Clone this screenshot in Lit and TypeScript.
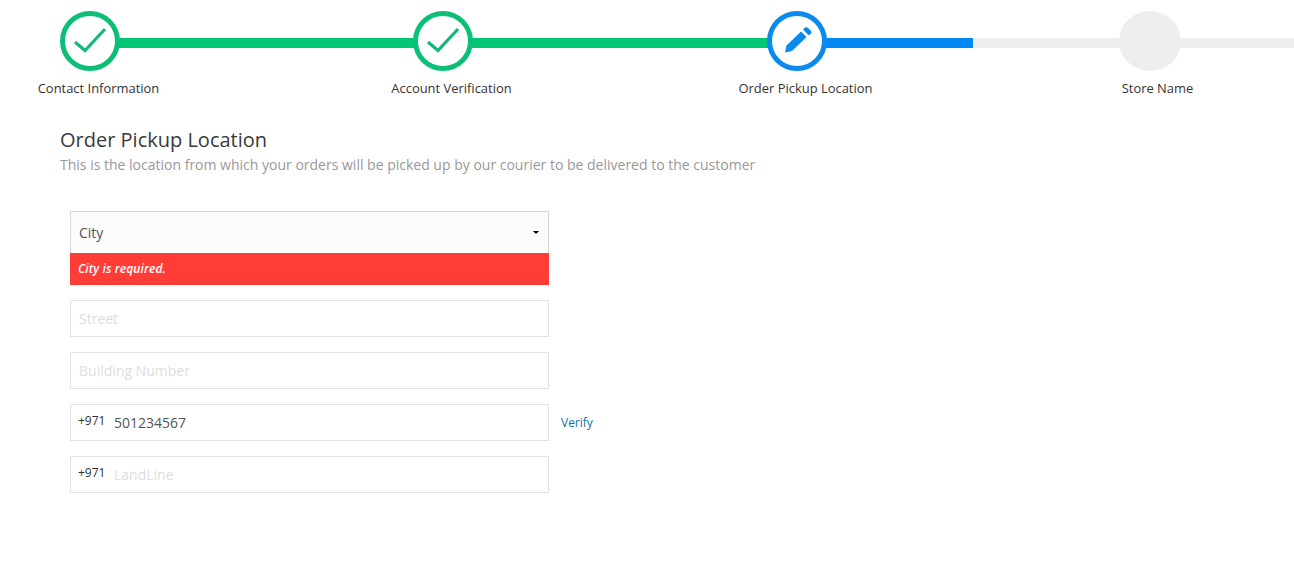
import { LitElement, html, css, svg } from "lit";
import { customElement } from "lit/decorators.js";

const check = svg`<svg class="ico" width="50" height="50" viewBox="0 0 50 50"><path d="M10 26 L20 34.500 L40 13" fill="none" stroke="#14b878" stroke-width="3.200"/></svg>`;
const pencil = svg`<svg class="ico pen" width="27" height="26" viewBox="0 0 27 26"><path fill="#0a8aec" d="M0 25.500 L1.500 18.500 L16 4.500 L21.500 10 L7 24 Z"/><path fill="#0a8aec" d="M18 2.500 L20 .6 Q21.300 -.2 22.500 .6 L26 4 Q27 5.200 26 6.500 L23.500 8.300 Z"/></svg>`;

@customElement("app-root")
export class AppRoot extends LitElement {
  static styles = css`
    :host { display: block; width: 1294px; height: 582px; overflow: hidden; background: #fff;
      font-family: "Open Sans", sans-serif; color: #333; }
    .stepper { display: grid; grid-template-columns: 353px 354px 352px 145px; padding: 11px 0 0 60px; height: 99px; box-sizing: border-box; }
    .step { position: relative; }
    .bar { position: absolute; left: 30px; right: -30px; top: 27px; height: 10px; background: #eee; }
    .bar.done { background: #00c774; }
    .bar.active { background: linear-gradient(to right, #0088f5 176px, #eee 176px); }
    .circle { position: relative; width: 60px; height: 60px; box-sizing: border-box; border-radius: 50%; background: #fff;
      border: 5px solid #0cbf76; display: flex; align-items: center; justify-content: center; }
    .circle.active { border-color: #0a8aec; }
    .circle.todo { border: none; background: #eee; width: 62px; }
    .ico { display: block; flex: none; }
    .pen { position: relative; left: 1px; top: -1px; }
    .label { position: relative; width: 200px; margin: 9px 0 0 -61.500px; text-align: center; font-size: 12.950px; line-height: 17px; color: #333; }
    .intro { padding: 19px 0 0 60px; }
    h1 { margin: 8px 0 0; font-size: 20px; font-weight: 400; line-height: 27px; color: #3a3a3a; }
    .sub { margin: 1px 0 0; font-size: 14px; line-height: 21px; color: #999; }
    form { display: flex; flex-direction: column; padding: 36px 0 0 70px; }
    .group { width: 479px; margin-bottom: 15px; }
    .select { height: 42px; box-sizing: border-box; border: 1px solid #d4d4d4; border-bottom: none; background: #fcfcfc;
      display: flex; align-items: center; justify-content: space-between; padding: 0 9px 0 8px; font-size: 14px; color: #555; }
    .caret { width: 0; height: 0; border-left: 3px solid transparent; border-right: 3px solid transparent; border-top: 3px solid #000; }
    .error { height: 32px; background: #ff3d36; color: #fff; font-size: 12px; font-style: italic; font-weight: 600;
      line-height: 32px; padding-left: 8px; letter-spacing: .12px; }
    .row { display: flex; align-items: center; gap: 12px; margin-bottom: 15px; }
    .input { width: 479px; height: 37px; box-sizing: border-box; border: 1px solid #e2e2e2; display: flex; align-items: center;
      padding: 0 8px 0 7px; font-size: 14px; color: #555; background: #fff; flex: none; }
    .input.spaced { margin-bottom: 15px; }
    .ph { color: #ddd; padding-left: 1px; }
    .code { font-size: 12px; color: #333; width: 35px; flex: none; position: relative; top: -2px; }
    .num { padding-left: 1px; }
    .verify { font-size: 12px; font-weight: 500; color: #0077aa; }
  `;

  render() {
    return html`
      <div class="stepper">
        <div class="step"><div class="bar done"></div><div class="circle">${check}</div><div class="label">Contact Information</div></div>
        <div class="step"><div class="bar done"></div><div class="circle">${check}</div><div class="label">Account Verification</div></div>
        <div class="step"><div class="bar active"></div><div class="circle active">${pencil}</div><div class="label">Order Pickup Location</div></div>
        <div class="step"><div class="bar"></div><div class="circle todo"></div><div class="label">Store Name</div></div>
      </div>
      <div class="intro">
        <h1>Order Pickup Location</h1>
        <p class="sub">This is the location from which your orders will be picked up by our courier to be delivered to the customer</p>
      </div>
      <form>
        <div class="group">
          <div class="select"><span>City</span><span class="caret"></span></div>
          <div class="error">City is required.</div>
        </div>
        <div class="input spaced"><span class="ph">Street</span></div>
        <div class="input spaced"><span class="ph">Building Number</span></div>
        <div class="row"><div class="input"><span class="code">+971</span><span class="num">501234567</span></div><span class="verify">Verify</span></div>
        <div class="input"><span class="code">+971</span><span class="ph">LandLine</span></div>
      </form>
    `;
  }
}
